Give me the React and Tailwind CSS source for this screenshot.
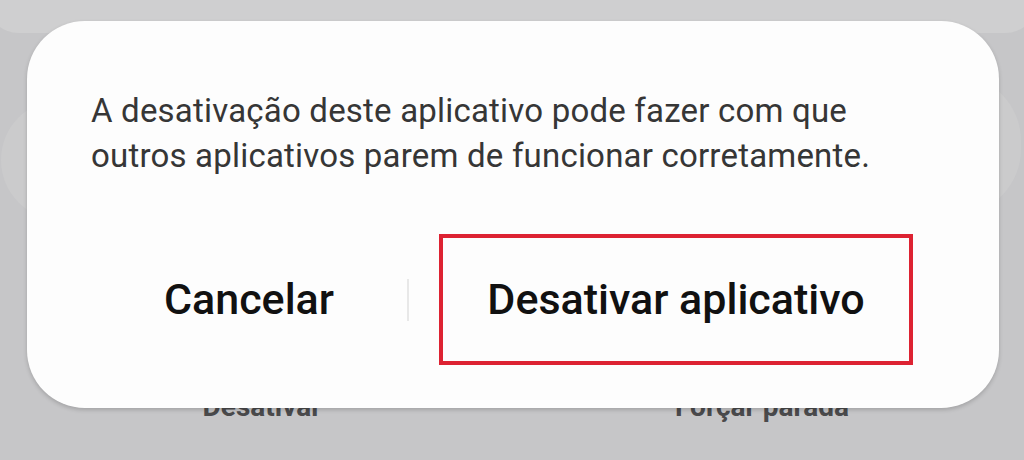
import React from "react";

export default function App() {
  return (
    <div
      className="relative w-[1024px] h-[460px] overflow-hidden bg-[#c6c6c8]"
      style={{ fontFamily: "Roboto, 'Noto Sans', sans-serif" }}
    >
      {/* dimmed background page */}
      <div className="flex flex-col">
        <div className="h-[33px] mx-[-14px] rounded-b-[48px] bg-[#cfcfd0]" />
        <div className="flex justify-between items-start">
          <div className="mt-[67px] ml-[1px] h-[120px] w-[400px] rounded-[60px] bg-[#cbcbcc]" />
          <div className="mt-[42px] mr-[3px] h-[140px] w-[400px] rounded-[66px] bg-[#cbcbcc]" />
        </div>
        <div className="flex mt-[173px] text-[28px] font-bold text-[#4a4a4c] leading-none">
          <div className="w-[524px] text-center">Desativar</div>
          <div className="w-[476px] text-center">Forçar parada</div>
        </div>
      </div>

      {/* dialog */}
      <div className="absolute left-[27px] top-[21px] w-[972px] h-[387px] rounded-[58px] bg-[#fdfdfd] shadow-[0_2px_4px_rgba(0,0,0,0.18)] flex flex-col">
        <p className="pl-[64px] pr-[30px] pt-[67px] text-[33px] leading-[45px] tracking-[0.2px] text-[#363636] whitespace-nowrap">
          A desativação deste aplicativo pode fazer com que
          <br />
          outros aplicativos parem de funcionar corretamente.
        </p>
        <div className="mt-[56px] ml-[64px] flex items-center">
          <div className="w-[316px] flex justify-center text-[43px] font-medium text-[#111111]">
            Cancelar
          </div>
          <div className="w-[2px] h-[42px] bg-[#e8e8e8]" />
          <div className="ml-[30px] w-[474px] h-[131px] border-4 border-[#dd2232] flex items-center justify-center text-[43px] font-medium text-[#111111]">
            Desativar aplicativo
          </div>
        </div>
      </div>
    </div>
  );
}
